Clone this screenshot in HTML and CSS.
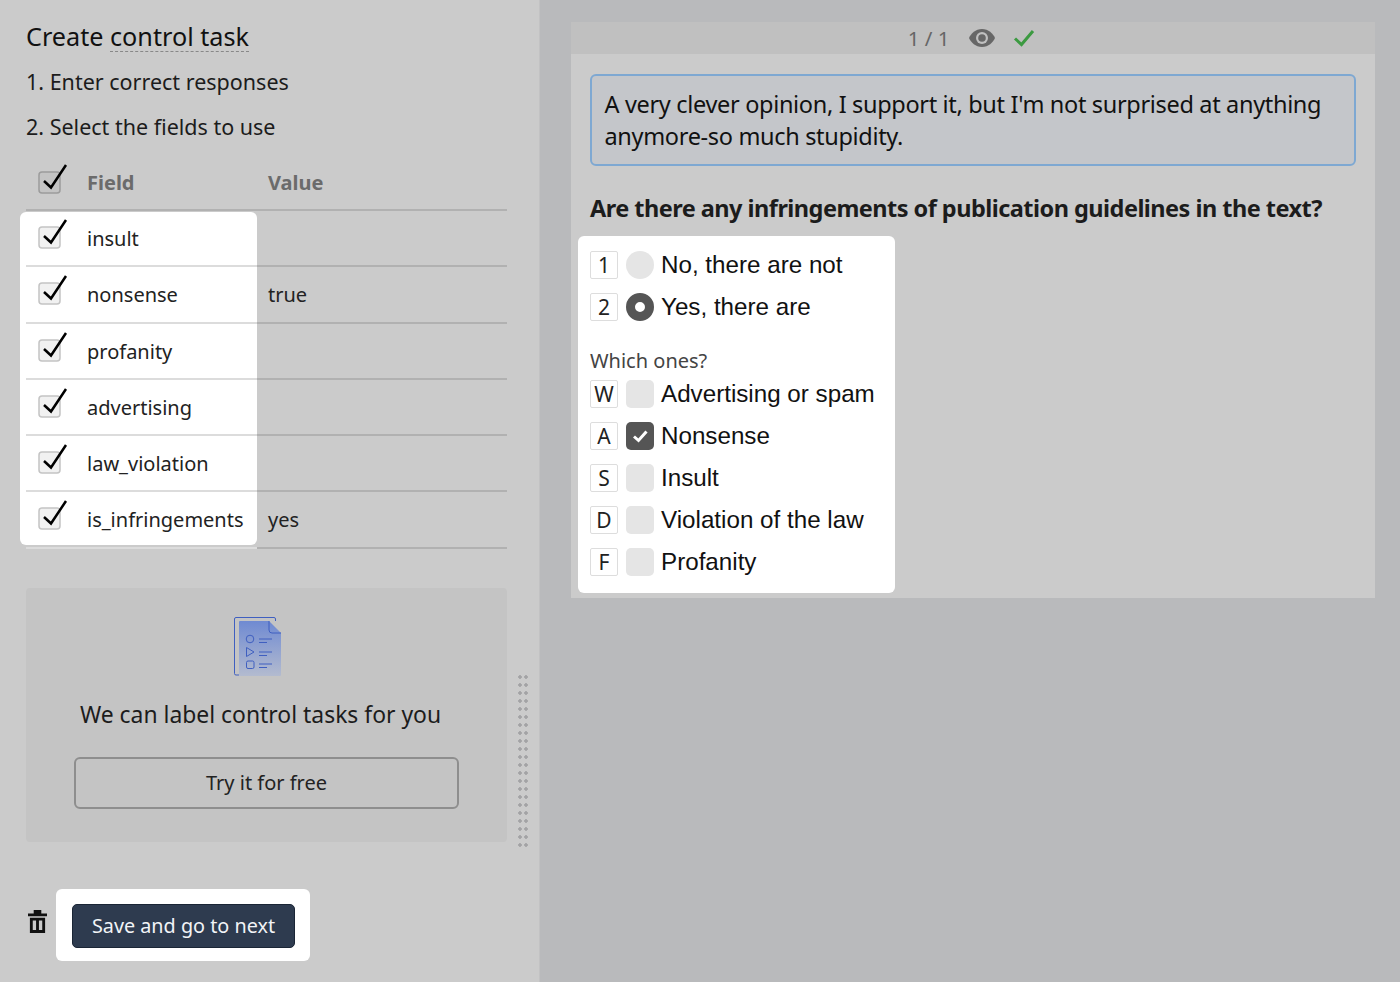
FILE: index.html
```html
<!DOCTYPE html>
<html lang="en">
<head>
  <meta charset="UTF-8">
  <title>Create control task</title>
  <link rel="stylesheet" href="styles.css">
</head>
<body>
<div class="page">
  <div class="side">
    <h2 class="title">Create <span class="dashed">control task</span></h2>
    <p class="step step-first">1. Enter correct responses</p>
    <p class="step">2. Select the fields to use</p>

    <div class="fields">
      <div class="fields-spot"></div>
      <div class="row row-head">
        <div class="cell-name">
          <svg class="tick" viewBox="0 0 30 34"><rect x="1" y="9" width="21" height="21" rx="3" class="tick-box"/><path d="M6 18l7 6.500L28 2" class="tick-mark"/></svg>
          <span>Field</span>
        </div>
        <div class="cell-value">Value</div>
      </div>
      <div class="row">
        <div class="cell-name">
          <svg class="tick" viewBox="0 0 30 34"><rect x="1" y="9" width="21" height="21" rx="3" class="tick-box"/><path d="M6 18l7 6.500L28 2" class="tick-mark"/></svg>
          <span>insult</span>
        </div>
        <div class="cell-value"></div>
      </div>
      <div class="row">
        <div class="cell-name">
          <svg class="tick" viewBox="0 0 30 34"><rect x="1" y="9" width="21" height="21" rx="3" class="tick-box"/><path d="M6 18l7 6.500L28 2" class="tick-mark"/></svg>
          <span>nonsense</span>
        </div>
        <div class="cell-value">true</div>
      </div>
      <div class="row">
        <div class="cell-name">
          <svg class="tick" viewBox="0 0 30 34"><rect x="1" y="9" width="21" height="21" rx="3" class="tick-box"/><path d="M6 18l7 6.500L28 2" class="tick-mark"/></svg>
          <span>profanity</span>
        </div>
        <div class="cell-value"></div>
      </div>
      <div class="row">
        <div class="cell-name">
          <svg class="tick" viewBox="0 0 30 34"><rect x="1" y="9" width="21" height="21" rx="3" class="tick-box"/><path d="M6 18l7 6.500L28 2" class="tick-mark"/></svg>
          <span>advertising</span>
        </div>
        <div class="cell-value"></div>
      </div>
      <div class="row">
        <div class="cell-name">
          <svg class="tick" viewBox="0 0 30 34"><rect x="1" y="9" width="21" height="21" rx="3" class="tick-box"/><path d="M6 18l7 6.500L28 2" class="tick-mark"/></svg>
          <span>law_violation</span>
        </div>
        <div class="cell-value"></div>
      </div>
      <div class="row">
        <div class="cell-name">
          <svg class="tick" viewBox="0 0 30 34"><rect x="1" y="9" width="21" height="21" rx="3" class="tick-box"/><path d="M6 18l7 6.500L28 2" class="tick-mark"/></svg>
          <span>is_infringements</span>
        </div>
        <div class="cell-value">yes</div>
      </div>
    </div>

    <div class="promo">
      <svg class="promo-icon" viewBox="0 0 50 62">
        <defs>
          <linearGradient id="sheet" x1="0" y1="0" x2="0" y2="1">
            <stop offset="0" stop-color="#6f8ad2"/>
            <stop offset="1" stop-color="#b3bbcf"/>
          </linearGradient>
        </defs>
        <path d="M6 59H3a1.500 1.500 0 0 1-1.500-1.500V3A1.500 1.500 0 0 1 3 1.500h38a1.500 1.500 0 0 1 1.500 1.500v2" fill="none" stroke="#3f5fc0" stroke-width="1"/>
        <path d="M7 5h29l12 12v42a1 1 0 0 1-1 1H7a1 1 0 0 1-1-1V6a1 1 0 0 1 1-1z" fill="url(#sheet)"/>
        <path d="M36 5v9a3 3 0 0 0 3 3h9" fill="none" stroke="#3f5fc0" stroke-width="1"/>
        <g fill="none" stroke="#3f5fc0" stroke-width="1">
          <circle cx="17" cy="23" r="3.800"/>
          <path d="M13.500 31.500v9l7.500-4.500z"/>
          <rect x="13.500" y="45" width="7.500" height="7.500" rx="1.500"/>
          <path d="M26 23h13M26 26.500h8M26 36h13M26 39.500h8M26 48h13M26 51.500h8"/>
        </g>
      </svg>
      <p class="promo-text">We can label control tasks for you</p>
      <button class="btn-free">Try it for free</button>
    </div>

    <div class="actions">
      <svg class="trash" viewBox="0 0 20 24"><path d="M6 0h8v3.500h6v3H0v-3h6zM2 8h16v16H2zM5 11v10h3.500V11zM11.500 11v10H15V11z" fill="#111" fill-rule="evenodd"/></svg>
      <div class="save-spot">
        <button class="btn-save">Save and go to next</button>
      </div>
    </div>

    <div class="grip"></div>
  </div>

  <div class="main">
    <div class="task">
      <div class="task-bar">
        <span class="counter">1 / 1</span>
        <svg class="eye" viewBox="0 0 28 20"><path d="M14 1C7.500 1 3 5.500 1 10c2 4.500 6.500 9 13 9s11-4.500 13-9c-2-4.500-6.500-9-13-9z" fill="#676767"/><circle cx="14" cy="10" r="6" fill="#c0c0c0"/><circle cx="14" cy="10" r="3.800" fill="#676767"/></svg>
        <svg class="ok" viewBox="0 0 22 18"><path d="M2 9.500l6.500 6L20 2" fill="none" stroke="#3c9a41" stroke-width="3"/></svg>
      </div>
      <div class="task-body">
        <div class="quote">A very clever opinion, I support it, but I'm not surprised at anything anymore-so much stupidity.</div>
        <h3 class="question">Are there any infringements of publication guidelines in the text?</h3>
        <div class="answers">
          <div class="opt"><span class="key">1</span><span class="radio"></span><span>No, there are not</span></div>
          <div class="opt"><span class="key">2</span><span class="radio radio-on"></span><span>Yes, there are</span></div>
          <div class="which">Which ones?</div>
          <div class="opt"><span class="key">W</span><span class="box"></span><span>Advertising or spam</span></div>
          <div class="opt"><span class="key">A</span><span class="box box-on"><svg viewBox="0 0 28 28"><path d="M8 14.500l4.500 4L20.500 9.500" fill="none" stroke="#fff" stroke-width="3"/></svg></span><span>Nonsense</span></div>
          <div class="opt"><span class="key">S</span><span class="box"></span><span>Insult</span></div>
          <div class="opt"><span class="key">D</span><span class="box"></span><span>Violation of the law</span></div>
          <div class="opt"><span class="key">F</span><span class="box"></span><span>Profanity</span></div>
        </div>
      </div>
    </div>
  </div>
</div>
</body>
</html>
```

FILE: styles.css
```css
body {
  margin: 0;
  font-family: "Noto Sans", Arial, sans-serif;
  color: #222;
  background-color: #b9babc;
}

.page {
  display: flex;
  height: 982px;
  overflow: hidden;
}

/* left column */
.side {
  position: relative;
  box-sizing: border-box;
  width: 540px;
  padding: 0 32px 0 26px;
  background-color: #cbcbcb;
  border-right: 1px solid #c2c2c3;
}

.title {
  margin: 20px 0 0;
  font-size: 25.200px;
  line-height: 32px;
  font-weight: 400;
  color: #111;
}

.dashed {
  display: inline-block;
  line-height: 30px;
  border-bottom: 1px dashed #888;
}

.step {
  margin: 0;
  font-size: 21.500px;
  line-height: 29px;
  color: #1c1c1c;
}

.step-first {
  margin-top: 15px;
}

.step + .step {
  margin-top: 16px;
}

/* fields table */
.fields {
  position: relative;
  margin-top: 14px;
}

.fields-spot {
  position: absolute;
  left: -6px;
  top: 57px;
  width: 237px;
  height: 333px;
  background-color: #fff;
  border-radius: 6px;
}

.row {
  position: relative;
  display: flex;
  height: 56.250px;
  font-size: 20px;
  color: #222;
}

.row-head {
  height: 56px;
  font-weight: 700;
  color: #6b6b6b;
}

.cell-name {
  display: flex;
  align-items: flex-start;
  box-sizing: border-box;
  width: 231px;
  padding-left: 12px;
  border-bottom: 2px solid #dcdcdc;
}

.row-head .cell-name {
  border-bottom-color: #b1b1b1;
}

.cell-name span {
  margin-left: 19px;
  line-height: 55px;
}

.cell-value {
  flex: 1;
  padding-left: 11px;
  line-height: 55px;
  border-bottom: 2px solid #b1b1b1;
}

.tick {
  flex: none;
  width: 30px;
  height: 34px;
  margin-top: 7px;
}

.row-head .tick {
  margin-top: 8px;
}

.tick-box {
  fill: #f1f1f1;
  stroke: #c4c4c4;
  stroke-width: 1.500;
}

.row-head .tick-box {
  fill: #c4c4c4;
  stroke: #9c9c9c;
}

.tick-mark {
  fill: none;
  stroke: #000;
  stroke-width: 2.500;
}

/* promo card */
.promo {
  display: flex;
  flex-direction: column;
  align-items: center;
  height: 254px;
  margin-top: 39px;
  background-color: #c4c4c4;
  border-radius: 4px;
}

.promo-icon {
  width: 50px;
  height: 62px;
  margin-top: 28px;
  margin-left: -18px;
}

.promo-text {
  margin: 21px 0 0 -12px;
  font-size: 22.900px;
  line-height: 32px;
  color: #1c1c1c;
}

.btn-free {
  width: 385px;
  height: 52px;
  margin-top: 26px;
  font-family: inherit;
  font-size: 20px;
  color: #222;
  background: none;
  border: 2px solid #8e8e8e;
  border-radius: 6px;
}

/* bottom actions */
.actions {
  display: flex;
  align-items: center;
  margin-top: 47px;
}

.trash {
  width: 19px;
  height: 23px;
  margin: 0 0 6px 2px;
}

.save-spot {
  margin-left: 9px;
  padding: 15px 15px 13px 16px;
  background-color: #fff;
  border-radius: 6px;
}

.btn-save {
  display: block;
  width: 223px;
  height: 44px;
  font-family: inherit;
  font-size: 19.800px;
  color: #f2f4f7;
  background-color: #2e3b4f;
  border: 1px solid #1a2535;
  border-radius: 5px;
}

.grip {
  position: absolute;
  left: 517px;
  top: 673px;
  width: 12px;
  height: 176px;
  background-image: radial-gradient(circle, #a3a3a5 1.500px, transparent 2px);
  background-size: 6px 8px;
}

/* right column */
.main {
  flex: 1;
  padding: 22px 25px 0 31px;
}

.task {
  background-color: #cbcbcb;
}

.task-bar {
  display: flex;
  align-items: center;
  justify-content: center;
  height: 32px;
  padding-right: 3px;
  background-color: #c0c0c0;
}

.counter {
  font-size: 20.500px;
  color: #666;
}

.eye {
  width: 28px;
  height: 20px;
  margin-left: 19px;
}

.ok {
  width: 22px;
  height: 18px;
  margin-left: 17px;
}

.task-body {
  padding: 20px 19px 5px;
}

.quote {
  padding: 12px 12.500px;
  font-size: 23.500px;
  letter-spacing: -0.330px;
  line-height: 32px;
  color: #111;
  background-color: #c4c6ca;
  border: 2px solid #7ea8d2;
  border-radius: 6px;
}

.question {
  margin: 26px 0 12px;
  font-size: 23.500px;
  letter-spacing: -0.530px;
  line-height: 32px;
  font-weight: 700;
  color: #1c1c1c;
}

.answers {
  box-sizing: border-box;
  width: 317px;
  height: 357px;
  margin-left: -12px;
  padding: 15px 12px 0;
  background-color: #fff;
  border-radius: 6px;
}

.opt {
  display: flex;
  align-items: center;
  height: 28px;
  margin-bottom: 14px;
  font-family: "Liberation Sans", Arial, sans-serif;
  font-size: 24.200px;
  color: #111;
}

.key {
  box-sizing: border-box;
  flex: none;
  width: 28px;
  height: 28px;
  margin-right: 7.500px;
  font-family: "Noto Sans", Arial, sans-serif;
  font-size: 21px;
  line-height: 26px;
  text-align: center;
  color: #222;
  border: 1px solid #ddd;
  border-radius: 2px;
}

.radio,
.box {
  flex: none;
  width: 28px;
  height: 28px;
  margin-right: 7.500px;
  background-color: #e5e5e5;
}

.radio {
  border-radius: 50%;
}

.radio-on {
  box-sizing: border-box;
  background-color: #fff;
  border: 9px solid #555;
}

.box {
  border-radius: 5px;
}

.box-on {
  background-color: #555;
}

.box-on svg {
  display: block;
}

.which {
  height: 33px;
  margin-top: 26px;
  font-size: 20px;
  line-height: 28px;
  color: #444;
}
```
